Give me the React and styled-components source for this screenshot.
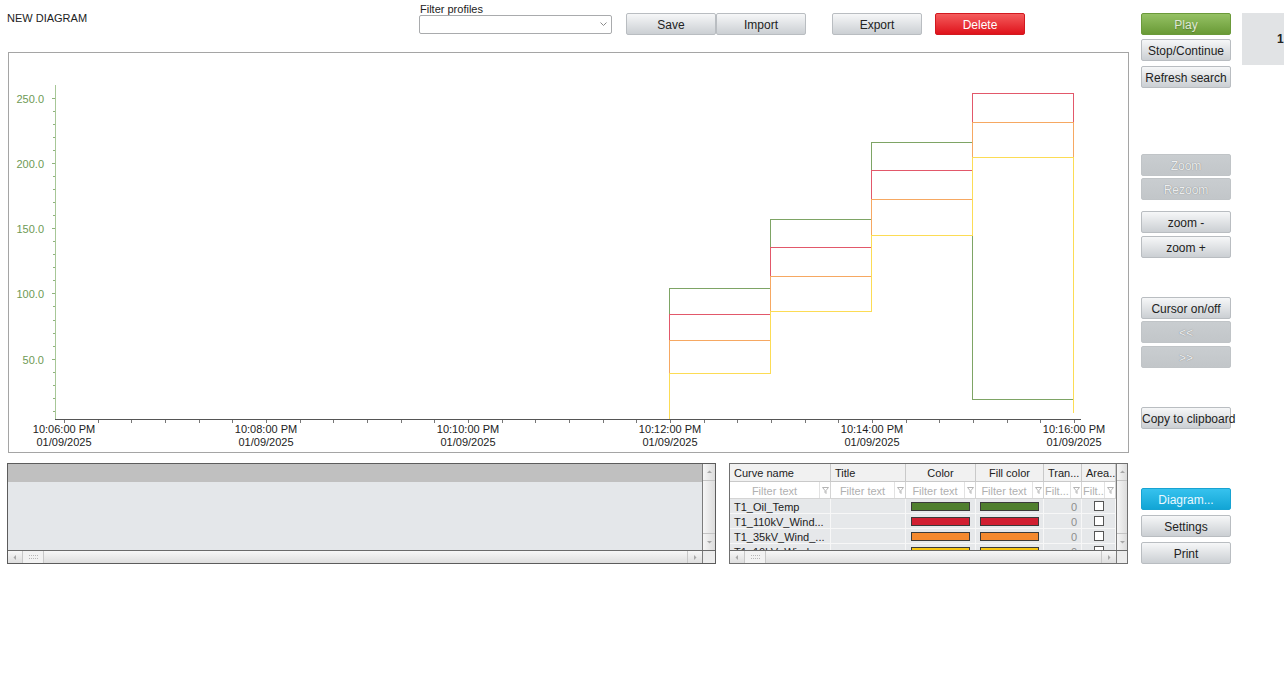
import React from 'react'
import styled, { createGlobalStyle, css } from 'styled-components'

const GlobalStyle = createGlobalStyle`
  body {
    margin: 0;
    background: #fff;
    font-family: "Liberation Sans", Arial, sans-serif;
    color: #222;
  }
`

const Page = styled.div`
  display: flex;
  align-items: flex-start;
  width: 1284px;
  height: 683px;
  overflow: hidden;
`

const Main = styled.div`
  width: 1122px;
  padding-left: 7px;
  flex-shrink: 0;
`

const TopBar = styled.div`
  display: flex;
  align-items: flex-start;
  height: 52px;
`

const Title = styled.div`
  width: 412px;
  padding-top: 12px;
  font-size: 11px;
  line-height: 13px;
`

const FilterGroup = styled.div`
  width: 193px;
  display: flex;
  flex-direction: column;
  padding-top: 3px;
`

const FilterLabel = styled.div`
  font-size: 11px;
  line-height: 12px;
  padding-left: 1px;
`

const SelectBox = styled.div`
  height: 19px;
  box-sizing: border-box;
  border: 1px solid #a9abad;
  border-radius: 2px;
  background: #fff;
  display: flex;
  align-items: center;
  justify-content: flex-end;
  padding-right: 4px;
`

const ButtonRow = styled.div`
  display: flex;
  margin-top: 13px;
  margin-left: ${p => p.$ml || 0}px;
`

const variants = {
  green: css`
    background: linear-gradient(#95c164, #699a36);
    border-color: #6b9a3a;
    color: #dfe8d6;
    text-shadow: 0 1px 1px rgba(0, 0, 0, 0.25);
  `,
  red: css`
    background: linear-gradient(#f45c5c, #df121b);
    border-color: #d2191f;
    color: #fff;
  `,
  blue: css`
    background: linear-gradient(#36c2ee, #12a5d5);
    border-color: #17a3d2;
    color: #e9f8ff;
  `,
  disabled: css`
    background: linear-gradient(#c9cdd0, #c2c6c9);
    border-color: #c0c4c7;
    color: #eceeef;
    text-shadow: 0 0 1px rgba(0, 0, 0, 0.45);
  `,
}

const Btn = styled.button`
  width: 90px;
  height: 22px;
  box-sizing: border-box;
  border: 1px solid #b9bdc1;
  border-radius: 2px;
  background: linear-gradient(#f6f7f8, #cbcfd3);
  font-family: "Liberation Sans", Arial, sans-serif;
  font-size: 12px;
  color: #222;
  padding: 1px 0 0;
  margin-top: ${p => p.$mt || 0}px;
  margin-left: ${p => p.$ml || 0}px;
  white-space: nowrap;
  flex-shrink: 0;
  ${p => p.$variant && variants[p.$variant]}
`

const ChartPanel = styled.div`
  margin-left: 1px;
  width: 1121px;
  height: 401px;
  box-sizing: border-box;
  border: 1px solid #a5a5a5;
  background: #fff;

  svg {
    display: block;
  }
`

const BottomRow = styled.div`
  display: flex;
  margin-top: 10px;
`

const LeftBox = styled.div`
  width: 709px;
  height: 101px;
  box-sizing: border-box;
  border: 1px solid #5c5c5c;
  display: flex;
  flex-direction: column;
  background: #e4e7ea;
`

const PanelMain = styled.div`
  flex: 1;
  display: flex;
  min-height: 0;
`

const LeftContent = styled.div`
  flex: 1;
  display: flex;
  flex-direction: column;
`

const LeftHeader = styled.div`
  height: 18px;
  background: #c0c0c0;
`

const LeftBody = styled.div`
  flex: 1;
  background: #e4e7ea;
`

const VScroll = styled.div`
  width: ${p => p.$w || 12}px;
  box-sizing: border-box;
  border-left: 1px solid #7c7c7c;
  background: linear-gradient(to right, #f6f6f6, #dcdcdc);
  display: flex;
  flex-direction: column;
  justify-content: space-between;
  align-items: stretch;
`

const VArrow = styled.div`
  height: 16px;
  display: flex;
  align-items: center;
  justify-content: center;
  border-${p => (p.$down ? 'top' : 'bottom')}: 1px solid #c4c4c4;
`

const VTrack = styled.div`
  flex: 1;
`

const HScroll = styled.div`
  height: 13px;
  box-sizing: border-box;
  border-top: 1px solid #6a6a6a;
  display: flex;
  background: linear-gradient(#f7f7f7, #dedede);
`

const HArrow = styled.div`
  width: 14px;
  display: flex;
  align-items: center;
  justify-content: center;
  border-${p => (p.$right ? 'left' : 'right')}: 1px solid #c8c8c8;
`

const HThumb = styled.div`
  width: 20px;
  display: flex;
  align-items: center;
  justify-content: center;
  border-right: 1px solid #c8c8c8;
  background: #f2f2f2;
`

const HTrack = styled.div`
  flex: 1;
`

const Corner = styled.div`
  width: ${p => p.$w || 12}px;
  box-sizing: border-box;
  border-left: 1px solid #7c7c7c;
  background: #ececec;
`

const TableBox = styled(LeftBox)`
  width: 399px;
  margin-left: 13px;
  border-color: #707070;
  background: #e6e8ea;
`

const GridArea = styled.div`
  flex: 1;
  overflow: hidden;
`

const Grid = styled.div`
  display: grid;
  grid-template-columns: 101px 75px 70px 68px 38px 34px;
  grid-template-rows: 18px 17px;
  grid-auto-rows: 15px;
  font-size: 11px;
`

const HeadCell = styled.div`
  background: #f1f1f1;
  border-right: 1px solid #c9c9c9;
  border-bottom: 1px solid #c9c9c9;
  display: flex;
  align-items: center;
  justify-content: ${p => (p.$center ? 'center' : 'flex-start')};
  padding-left: ${p => (p.$center ? 0 : 4)}px;
  white-space: nowrap;
  overflow: hidden;
`

const FilterCell = styled.div`
  background: #fff;
  border-right: 1px solid #d4d4d4;
  border-bottom: 1px solid #d4d4d4;
  display: flex;
  align-items: center;
  color: #b0b0b0;
  white-space: nowrap;
  overflow: hidden;
`

const FilterText = styled.span`
  flex: 1;
  padding-top: 1px;
  text-align: ${p => (p.$left ? 'left' : 'center')};
  padding-left: ${p => (p.$left ? 1 : 0)}px;
  overflow: hidden;
`

const FunnelBox = styled.span`
  width: 10px;
  height: 100%;
  display: flex;
  align-items: center;
  justify-content: center;
  border-left: 1px solid #e2e2e2;
  flex-shrink: 0;
`

const DataCell = styled.div`
  background: #e6e8ea;
  border-right: 1px solid #f7f7f7;
  border-bottom: 1px solid #f7f7f7;
  display: flex;
  align-items: center;
  justify-content: ${p => p.$justify || 'flex-start'};
  padding: ${p => (p.$justify === 'flex-end' ? '1px 4px 0 0' : p.$justify ? '0' : '1px 0 0 4px')};
  white-space: nowrap;
  overflow: hidden;
  color: ${p => (p.$muted ? '#8d8d8d' : '#222')};
`

const Swatch = styled.span`
  width: 59px;
  height: 9px;
  box-sizing: border-box;
  border: 1px solid #3a3a3a;
  background: ${p => p.$color};
`

const Check = styled.span`
  width: 10px;
  height: 10px;
  box-sizing: border-box;
  border: 1px solid #555;
  background: #fff;
`

const Side = styled.div`
  width: 90px;
  margin-left: 12px;
  padding-top: 13px;
  display: flex;
  flex-direction: column;
  flex-shrink: 0;
`

const InfoBox = styled.div`
  width: 42px;
  height: 52px;
  margin-left: 11px;
  margin-top: 13px;
  background: #e1e3e5;
  display: flex;
  align-items: center;
  padding-left: 35px;
  box-sizing: border-box;
  font-size: 12px;
  font-weight: bold;
  overflow: hidden;
  flex-shrink: 0;
`

const series = [
  { name: 'T1_Oil_Temp', swatch: '#4f7f2e', line: '#7ea465', values: [104.1, 157, 216, 19.1] },
  { name: 'T1_110kV_Wind...', swatch: '#d11f31', line: '#e2586a', values: [84.2, 135.5, 194.5, 253.4] },
  { name: 'T1_35kV_Wind_...', swatch: '#f5892e', line: '#f6a862', values: [64.3, 113.3, 172.3, 231.2] },
  { name: 'T1_10kV_Wind...', swatch: '#f8c614', line: '#fcdc55', values: [39, 86.5, 144.7, 204.4] },
]

const yOf = v => Math.round(424 - v * 1.306) + 0.5
const xTicks = ['10:06:00 PM', '10:08:00 PM', '10:10:00 PM', '10:12:00 PM', '10:14:00 PM', '10:16:00 PM']

function Chart() {
  const minorX = []
  for (let k = 0; k <= 30; k++) minorX.push(Math.round(64 + (101 / 3) * k) + 0.5)
  const minorY = []
  for (let v = 10; v <= 250; v += 10) minorY.push(v)

  return (
    <svg width="1119" height="399" viewBox="9 53 1119 399" shapeRendering="crispEdges">
      {series.map(s => {
        const [a, b, c, d] = s.values.map(yOf)
        const path = `M669.5 419 V${a} H770.5 V${b} H871.5 V${c} H972.5 V${d} H1073.5 V413`
        return <path key={s.name} d={path} fill="none" stroke={s.line} strokeWidth="1" />
      })}

      <line x1="55.5" y1="85" x2="55.5" y2="419" stroke="#a7c797" />
      {minorY.map(v => (
        <line key={v} x1={v % 50 === 0 ? 52 : 53} y1={yOf(v)} x2="55" y2={yOf(v)} stroke="#8fb37c" />
      ))}
      {[50, 100, 150, 200, 250].map(v => (
        <text key={v} x="44" y={yOf(v) + 4} textAnchor="end" fontSize="11" fill="#6e9a55"
          fontFamily='"Liberation Sans", Arial, sans-serif'>
          {v.toFixed(1)}
        </text>
      ))}

      <line x1="55" y1="419.5" x2="1081" y2="419.5" stroke="#555" />
      {minorX.map(x => (
        <line key={x} x1={x} y1="420" x2={x} y2="423" stroke="#777" />
      ))}
      {xTicks.map((t, i) => {
        const x = 64 + 202 * i
        return (
          <g key={t} fontFamily='"Liberation Sans", Arial, sans-serif' fontSize="11" fill="#222" textAnchor="middle">
            <text x={x} y="433">{t}</text>
            <text x={x} y="446">01/09/2025</text>
          </g>
        )
      })}
    </svg>
  )
}

const Chevron = () => (
  <svg width="7" height="5" viewBox="0 0 7 5">
    <path d="M0.5 0.5 L3.5 3.5 L6.5 0.5" fill="none" stroke="#8a8a8a" strokeWidth="1" />
  </svg>
)

const Funnel = () => (
  <svg width="7" height="7" viewBox="0 0 7 7">
    <path d="M0.5 0.5 H6.5 L4 3.5 V6.5 L3 5.5 V3.5 Z" fill="#fff" stroke="#b4b4b4" strokeWidth="1" />
  </svg>
)

const Tri = ({ dir }) => {
  const d = {
    up: 'M1 4 L3.5 1.5 L6 4 Z',
    down: 'M1 2 L3.5 4.5 L6 2 Z',
    left: 'M4 1 L1.5 3.5 L4 6 Z',
    right: 'M2 1 L4.5 3.5 L2 6 Z',
  }[dir]
  return (
    <svg width="7" height="7" viewBox="0 0 7 7">
      <path d={d} fill="#a8a8a8" />
    </svg>
  )
}

const Grip = () => (
  <svg width="9" height="4" viewBox="0 0 9 4">
    <path d="M0 0.5 H9 M0 3.5 H9" stroke="#b6b6b6" strokeDasharray="1 1" />
  </svg>
)

function Scrollbars({ children, w }) {
  return (
    <>
      <PanelMain>
        {children}
        <VScroll $w={w}>
          <VArrow><Tri dir="up" /></VArrow>
          <VTrack />
          <VArrow $down><Tri dir="down" /></VArrow>
        </VScroll>
      </PanelMain>
      <HScroll>
        <HArrow><Tri dir="left" /></HArrow>
        <HThumb><Grip /></HThumb>
        <HTrack />
        <HArrow $right><Tri dir="right" /></HArrow>
        <Corner $w={w} />
      </HScroll>
    </>
  )
}

const filters = [
  { label: 'Filter text' },
  { label: 'Filter text' },
  { label: 'Filter text' },
  { label: 'Filter text' },
  { label: 'Filt...', left: true },
  { label: 'Filt...', left: true },
]

const sideButtons = [
  { label: 'Play', variant: 'green', mt: 0 },
  { label: 'Stop/Continue', mt: 4 },
  { label: 'Refresh search', mt: 5 },
  { label: 'Zoom', variant: 'disabled', mt: 66 },
  { label: 'Rezoom', variant: 'disabled', mt: 2 },
  { label: 'zoom -', mt: 11 },
  { label: 'zoom +', mt: 3 },
  { label: 'Cursor on/off', mt: 39 },
  { label: '<<', variant: 'disabled', mt: 2 },
  { label: '>>', variant: 'disabled', mt: 3 },
  { label: 'Copy to clipboard', mt: 39 },
  { label: 'Diagram...', variant: 'blue', mt: 59 },
  { label: 'Settings', mt: 5 },
  { label: 'Print', mt: 5 },
]

export default function App() {
  return (
    <Page>
      <GlobalStyle />
      <Main>
        <TopBar>
          <Title>NEW DIAGRAM</Title>
          <FilterGroup>
            <FilterLabel>Filter profiles</FilterLabel>
            <SelectBox><Chevron /></SelectBox>
          </FilterGroup>
          <ButtonRow $ml={14}>
            <Btn>Save</Btn>
            <Btn>Import</Btn>
            <Btn $ml={26}>Export</Btn>
            <Btn $ml={13} $variant="red">Delete</Btn>
          </ButtonRow>
        </TopBar>

        <ChartPanel>
          <Chart />
        </ChartPanel>

        <BottomRow>
          <LeftBox>
            <Scrollbars w={13}>
              <LeftContent>
                <LeftHeader />
                <LeftBody />
              </LeftContent>
            </Scrollbars>
          </LeftBox>

          <TableBox>
            <Scrollbars w={11}>
              <GridArea>
                <Grid>
                  <HeadCell>Curve name</HeadCell>
                  <HeadCell>Title</HeadCell>
                  <HeadCell $center>Color</HeadCell>
                  <HeadCell $center>Fill color</HeadCell>
                  <HeadCell>Tran...</HeadCell>
                  <HeadCell>Area...</HeadCell>
                  {filters.map((f, i) => (
                    <FilterCell key={i}>
                      <FilterText $left={f.left}>{f.label}</FilterText>
                      <FunnelBox><Funnel /></FunnelBox>
                    </FilterCell>
                  ))}
                  {series.map(s => (
                    <React.Fragment key={s.name}>
                      <DataCell>{s.name}</DataCell>
                      <DataCell />
                      <DataCell $justify="center"><Swatch $color={s.swatch} /></DataCell>
                      <DataCell $justify="center"><Swatch $color={s.swatch} /></DataCell>
                      <DataCell $justify="flex-end" $muted>0</DataCell>
                      <DataCell $justify="center"><Check /></DataCell>
                    </React.Fragment>
                  ))}
                </Grid>
              </GridArea>
            </Scrollbars>
          </TableBox>
        </BottomRow>
      </Main>

      <Side>
        {sideButtons.map(b => (
          <Btn key={b.label} $mt={b.mt} $variant={b.variant}>{b.label}</Btn>
        ))}
      </Side>

      <InfoBox>1</InfoBox>
    </Page>
  )
}
